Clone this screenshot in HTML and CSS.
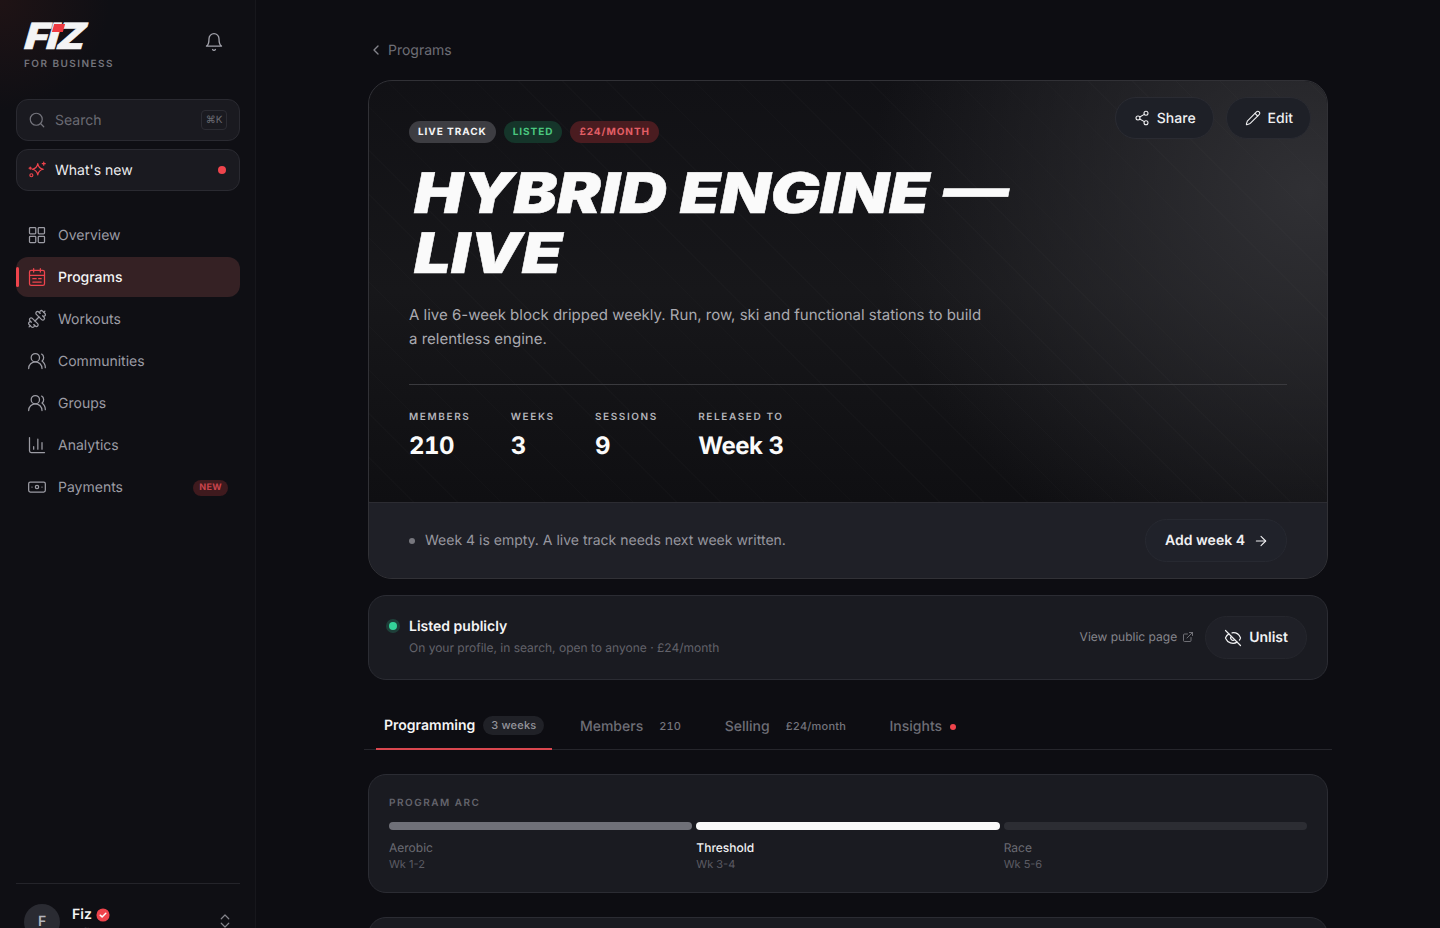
FILE: index.html
```html
<!DOCTYPE html>
<html>
  <head>
    <meta charset="utf-8" />
    <title>Hybrid Engine — Live</title>
    <link rel="stylesheet" href="styles.css">
  </head>
  <body>
    <div class="app">
      <aside class="sidebar">
        <div class="brandrow">
          <div class="brand">
            <div class="logo"><span class="logotext">FIZ</span><span class="logodot"></span></div>
            <div class="brandsub">FOR BUSINESS</div>
          </div>
          <svg class="icon bell" viewBox="0 0 24 24"><path d="M6 8a6 6 0 0 1 12 0c0 7 3 9 3 9H3s3-2 3-9"/><path d="M10.3 21a1.94 1.94 0 0 0 3.4 0"/></svg>
        </div>

        <div class="sidebox searchbox">
          <svg class="icon" viewBox="0 0 24 24"><circle cx="11" cy="11" r="8"/><path d="m21 21-4.3-4.3"/></svg>
          <span class="searchtext">Search</span>
          <span class="kbd">⌘K</span>
        </div>
        <div class="sidebox newsbox">
          <svg class="icon red" viewBox="0 0 24 24"><path d="M13 3.500c.8 4.700 2.800 6.700 7.500 7.500-4.700.8-6.700 2.800-7.500 7.500-.8-4.700-2.800-6.700-7.500-7.500 4.700-.8 6.700-2.800 7.500-7.500z"/><path d="M21 1.500v4M19 3.500h4"/><path d="M3 8v3M1.500 9.500h3"/><circle cx="4.500" cy="19" r="2"/></svg>
          <span class="newstext">What's new</span>
          <span class="reddot"></span>
        </div>

        <nav class="nav">
          <a class="navitem">
            <svg class="icon" viewBox="0 0 24 24"><rect x="3" y="3" width="7.500" height="7.500" rx="1"/><rect x="13.500" y="3" width="7.500" height="7.500" rx="1"/><rect x="13.500" y="13.500" width="7.500" height="7.500" rx="1"/><rect x="3" y="13.500" width="7.500" height="7.500" rx="1"/></svg>
            Overview
          </a>
          <a class="navitem active">
            <svg class="icon red" viewBox="0 0 24 24"><rect x="3" y="4" width="18" height="18" rx="2"/><path d="M8 2v4M16 2v4M3 10h18M7 14h4M14 14h3M7 18h10"/></svg>
            Programs
          </a>
          <a class="navitem">
            <svg class="icon flipx" viewBox="0 0 24 24"><path d="M14.4 14.4 9.600 9.600"/><path d="M18.657 21.485a2 2 0 1 1-2.829-2.828l-1.767 1.768a2 2 0 1 1-2.829-2.829l6.364-6.364a2 2 0 1 1 2.829 2.829l-1.768 1.767a2 2 0 1 1 2.828 2.829z"/><path d="m21.500 21.500-1.400-1.400"/><path d="M3.900 3.900 2.500 2.500"/><path d="M6.404 12.768a2 2 0 1 1-2.829-2.829l1.768-1.767a2 2 0 1 1-2.828-2.829l2.828-2.828a2 2 0 1 1 2.829 2.828l1.767-1.768a2 2 0 1 1 2.829 2.829z"/></svg>
            Workouts
          </a>
          <a class="navitem">
            <svg class="icon" viewBox="0 0 24 24"><path d="M18 21a8 8 0 0 0-16 0"/><circle cx="10" cy="8" r="5"/><path d="M22 20c0-3.370-2-6.500-4-8a5 5 0 0 0-.45-8.300"/></svg>
            Communities
          </a>
          <a class="navitem">
            <svg class="icon" viewBox="0 0 24 24"><path d="M18 21a8 8 0 0 0-16 0"/><circle cx="10" cy="8" r="5"/><path d="M22 20c0-3.370-2-6.500-4-8a5 5 0 0 0-.45-8.300"/></svg>
            Groups
          </a>
          <a class="navitem">
            <svg class="icon" viewBox="0 0 24 24"><path d="M3 3v16a2 2 0 0 0 2 2h16"/><path d="M18 17V9M13 17V5M8 17v-3"/></svg>
            Analytics
          </a>
          <a class="navitem">
            <svg class="icon" viewBox="0 0 24 24"><rect x="2" y="6" width="20" height="12" rx="2"/><circle cx="12" cy="12" r="2"/><path d="M6 12h.01M18 12h.01"/></svg>
            Payments
            <span class="newbadge">NEW</span>
          </a>
        </nav>

        <div class="account">
          <div class="avatar">F</div>
          <div class="accountinfo">
            <div class="accountname">
              Fiz
              <svg class="verified" viewBox="0 0 16 16"><circle cx="8" cy="8" r="7.500"/><path d="m4.800 8.200 2.200 2 4.200-4.200"/></svg>
            </div>
            <div class="accountsub">@fiz</div>
          </div>
          <svg class="icon updown" viewBox="0 0 24 24"><path d="m7 15 5 5 5-5"/><path d="m7 9 5-5 5 5"/></svg>
        </div>
      </aside>

      <main class="main">
        <div class="content">
          <a class="crumb">
            <svg class="icon" viewBox="0 0 24 24"><path d="m15 18-6-6 6-6"/></svg>
            Programs
          </a>

          <section class="hero">
            <div class="herotop">
              <div class="heroactions">
                <button class="pill">
                  <svg class="icon" viewBox="0 0 24 24"><circle cx="18" cy="5" r="3"/><circle cx="6" cy="12" r="3"/><circle cx="18" cy="19" r="3"/><path d="m8.590 13.510 6.830 3.980M15.410 6.510l-6.820 3.980"/></svg>
                  Share
                </button>
                <button class="pill">
                  <svg class="icon" viewBox="0 0 24 24"><path d="M21.174 6.812a1 1 0 0 0-3.986-3.987L3.842 16.174a2 2 0 0 0-.5.830l-1.321 4.352a.5.5 0 0 0 .623.622l4.353-1.320a2 2 0 0 0 .830-.497z"/><path d="m15 5 4 4"/></svg>
                  Edit
                </button>
              </div>
              <div class="tags">
                <span class="tag tagwhite">LIVE TRACK</span>
                <span class="tag taggreen">LISTED</span>
                <span class="tag tagred">£24/MONTH</span>
              </div>
              <h1 class="herotitle">HYBRID ENGINE — LIVE</h1>
              <p class="herodesc">A live 6-week block dripped weekly. Run, row, ski and functional stations to build a relentless engine.</p>
              <div class="stats">
                <div class="stat"><div class="statlabel">MEMBERS</div><div class="statvalue">210</div></div>
                <div class="stat"><div class="statlabel">WEEKS</div><div class="statvalue">3</div></div>
                <div class="stat"><div class="statlabel">SESSIONS</div><div class="statvalue">9</div></div>
                <div class="stat"><div class="statlabel">RELEASED TO</div><div class="statvalue">Week 3</div></div>
              </div>
            </div>
            <div class="herostrip">
              <span class="greydot"></span>
              <span class="striptext">Week 4 is empty. A live track needs next week written.</span>
              <button class="pill addweek">
                Add week 4
                <svg class="icon" viewBox="0 0 24 24"><path d="M5 12h14"/><path d="m12 5 7 7-7 7"/></svg>
              </button>
            </div>
          </section>

          <section class="card listing">
            <span class="greendot"></span>
            <div class="listinginfo">
              <div class="listingtitle">Listed publicly</div>
              <div class="listingsub">On your profile, in search, open to anyone · £24/month</div>
            </div>
            <a class="publiclink">
              View public page
              <svg class="icon" viewBox="0 0 24 24"><path d="M15 3h6v6"/><path d="M10 14 21 3"/><path d="M18 13v6a2 2 0 0 1-2 2H5a2 2 0 0 1-2-2V8a2 2 0 0 1 2-2h6"/></svg>
            </a>
            <button class="pill unlist">
              <svg class="icon" viewBox="0 0 24 24"><path d="M10.733 5.076a10.744 10.744 0 0 1 11.205 6.575 1 1 0 0 1 0 .696 10.747 10.747 0 0 1-1.444 2.490"/><path d="M14.084 14.158a3 3 0 0 1-4.242-4.242"/><path d="M17.479 17.499a10.750 10.750 0 0 1-15.417-5.151 1 1 0 0 1 0-.696 10.750 10.750 0 0 1 4.446-5.143"/><path d="m2 2 20 20"/></svg>
              Unlist
            </button>
          </section>

          <div class="tabs">
            <a class="tab tabactive">Programming <span class="tabbadge">3 weeks</span></a>
            <a class="tab">Members <span class="tabmeta">210</span></a>
            <a class="tab">Selling <span class="tabmeta">£24/month</span></a>
            <a class="tab">Insights <span class="reddot small"></span></a>
          </div>

          <section class="card arc">
            <div class="arclabel">PROGRAM ARC</div>
            <div class="arcbars">
              <div class="arccol">
                <div class="arcbar done"></div>
                <div class="arcname">Aerobic</div>
                <div class="arcweeks">Wk 1-2</div>
              </div>
              <div class="arccol">
                <div class="arcbar current"></div>
                <div class="arcname currentname">Threshold</div>
                <div class="arcweeks">Wk 3-4</div>
              </div>
              <div class="arccol">
                <div class="arcbar"></div>
                <div class="arcname">Race</div>
                <div class="arcweeks">Wk 5-6</div>
              </div>
            </div>
          </section>

          <section class="card nextcard"></section>
        </div>
      </main>
    </div>
  </body>
</html>
```

FILE: styles.css
```css
* {
  box-sizing: border-box;
}

html,
body {
  margin: 0;
  height: 928px;
  overflow: hidden;
}

body {
  background-color: #0d0d12;
  color: #f4f4f5;
  font-family: Inter, "Liberation Sans", sans-serif;
  text-rendering: geometricPrecision;
}

button {
  font-family: inherit;
  text-rendering: geometricPrecision;
}

.icon {
  width: 18px;
  height: 18px;
  fill: none;
  stroke: currentColor;
  stroke-width: 1.6;
  stroke-linecap: round;
  stroke-linejoin: round;
  flex-shrink: 0;
}

.icon.red,
.sidebox .icon.red {
  color: #ef444c;
}

.flipx {
  transform: scaleX(-1);
}

.app {
  display: flex;
  height: 928px;
}

/* sidebar */

.sidebar {
  width: 256px;
  height: 928px;
  flex-shrink: 0;
  display: flex;
  flex-direction: column;
  padding: 0 15px 0 16px;
  border-right: 1px solid #17171c;
  background: radial-gradient(circle at 0 0, #1f1315 0, #0f0f14 110px);
  overflow: hidden;
}

.brandrow {
  display: flex;
  justify-content: space-between;
  align-items: flex-start;
  padding: 22px 16px 0 8px;
  height: 99px;
}

.logo {
  position: relative;
  width: 66px;
  height: 28px;
}

.logotext {
  display: block;
  font-size: 36px;
  line-height: 28px;
  font-weight: 900;
  letter-spacing: -1.500px;
  color: #f4f4f5;
  transform-origin: 0 100%;
  transform: translateX(-2px) skewX(-16deg) scaleX(1.130);
  -webkit-text-stroke: 0.6px #f4f4f5;
}

.logodot {
  position: absolute;
  z-index: 1;
  left: 29px;
  top: 2px;
  width: 11px;
  height: 8px;
  background-color: #ef3b42;
  transform: skewX(-16deg);
}

.brandsub {
  margin-top: 8px;
  font-size: 10px;
  line-height: 12px;
  font-weight: 600;
  letter-spacing: 1.450px;
  color: #74747c;
}

.icon.bell {
  width: 20px;
  height: 20px;
  margin-top: 10px;
  color: #a1a1aa;
}

.sidebox {
  display: flex;
  align-items: center;
  height: 42px;
  padding: 0 12px;
  margin-bottom: 8px;
  border: 1px solid #2a2a31;
  border-radius: 12px;
  background-color: #1a1a20;
  font-size: 14px;
}

.sidebox .icon {
  width: 18px;
  height: 18px;
  margin-right: 9px;
  margin-left: -1px;
  color: #74747c;
}

.searchtext {
  flex: 1;
  color: #6b6b73;
}

.kbd {
  width: 26px;
  height: 20px;
  border: 1px solid #2c2c33;
  border-radius: 4px;
  font-size: 10px;
  line-height: 18px;
  text-align: center;
  color: #6b6b73;
}

.newstext {
  flex: 1;
  color: #ececef;
}

.reddot {
  width: 8px;
  height: 8px;
  margin-right: 1px;
  border-radius: 50%;
  background-color: #ef444c;
}

.reddot.small {
  width: 6px;
  height: 6px;
  margin-right: 0;
}

.nav {
  display: flex;
  flex-direction: column;
  gap: 2px;
  margin-top: 16px;
}

.navitem {
  position: relative;
  display: flex;
  align-items: center;
  gap: 11px;
  height: 40px;
  padding: 0 12px 0 11px;
  border-radius: 12px;
  font-size: 14px;
  font-weight: 400;
  color: #9c9ca4;
}

.navitem .icon {
  width: 20px;
  height: 20px;
  stroke-width: 1.500;
}

.navitem.active {
  background-color: #352124;
  color: #f4f4f5;
  font-weight: 500;
}

.navitem.active::before {
  content: "";
  position: absolute;
  left: 0;
  top: 10px;
  width: 3px;
  height: 20px;
  border-radius: 2px;
  background-color: #ef444c;
}

.newbadge {
  margin-left: auto;
  margin-top: 1px;
  padding: 0 6px;
  height: 16px;
  border-radius: 8px;
  background-color: #3f1a1e;
  color: #c9444c;
  font-size: 9px;
  line-height: 16px;
  font-weight: 700;
  letter-spacing: 0.4px;
}

.account {
  display: flex;
  align-items: flex-start;
  margin-top: auto;
  height: 45px;
  padding: 20px 8px 0 8px;
  border-top: 1px solid #24242a;
  flex-shrink: 0;
}

.avatar {
  width: 36px;
  height: 36px;
  flex-shrink: 0;
  border-radius: 50%;
  background-color: #2a2b32;
  color: #b4b4bb;
  font-size: 14px;
  font-weight: 600;
  line-height: 36px;
  text-align: center;
}

.accountinfo {
  flex: 1;
  margin-left: 12px;
  padding-top: 1px;
}

.accountname {
  display: flex;
  align-items: center;
  gap: 4px;
  height: 20px;
  font-size: 14px;
  font-weight: 600;
  line-height: 20px;
}

.verified {
  width: 14px;
  height: 14px;
  fill: #ef444c;
}

.verified path {
  fill: none;
  stroke: #ffffff;
  stroke-width: 1.700;
  stroke-linecap: round;
  stroke-linejoin: round;
}

.accountsub {
  font-size: 11px;
  line-height: 14px;
  color: #74747c;
}

.icon.updown {
  width: 18px;
  height: 18px;
  margin: 8px -2px 0 0;
  color: #85858c;
}

/* main column */

.main {
  flex: 1;
  height: 928px;
  overflow: hidden;
}

.content {
  width: 960px;
  margin: 0 auto;
  padding-top: 40px;
}

.crumb {
  display: flex;
  align-items: center;
  gap: 4px;
  height: 20px;
  margin-bottom: 20px;
  font-size: 14px;
  color: #6e6e76;
}

.crumb .icon {
  width: 16px;
  height: 16px;
  stroke-width: 2;
  color: #85858c;
}

.hero {
  border: 1px solid #313136;
  border-radius: 24px;
  overflow: hidden;
  background-color: #1f2027;
}

.herotop {
  position: relative;
  height: 422px;
  padding: 40px 40px 0 40px;
  border-bottom: 1px solid #2c2c32;
  background:
    repeating-linear-gradient(45deg, rgba(255, 255, 255, 0.013) 0 1px, transparent 1px 31px),
    radial-gradient(ellipse 440px 400px at 940px 110px, #303034 0, rgba(48, 48, 52, 0) 100%),
    linear-gradient(180deg, #111115 0, #17171a 50%, #0f0f12 100%);
}

.heroactions {
  position: absolute;
  top: 16px;
  right: 16px;
  display: flex;
  gap: 12px;
}

.pill {
  display: inline-flex;
  align-items: center;
  gap: 7px;
  height: 42px;
  padding: 0 17px 0 18px;
  border: 1px solid #2a2b32;
  border-radius: 22px;
  background-color: #1e2027;
  color: #f0f0f2;
  font-size: 14px;
  font-weight: 500;
}

.pill .icon {
  width: 16px;
  height: 16px;
}

.tags {
  display: flex;
  gap: 8px;
}

.tag {
  height: 22px;
  padding: 0 9px;
  border-radius: 11px;
  font-size: 10px;
  line-height: 22px;
  font-weight: 700;
  letter-spacing: 0.950px;
}

.tagwhite {
  background-color: #3d3d42;
  color: #f4f4f5;
}

.taggreen {
  background-color: #15352a;
  color: #4ac77f;
}

.tagred {
  background-color: #4a1c20;
  color: #e35f66;
}

.herotitle {
  width: 520px;
  margin: 20px 0 0 5px;
  font-size: 56px;
  line-height: 60px;
  font-weight: 900;
  font-style: italic;
  color: #fafafa;
  transform-origin: 0 0;
  transform: scaleX(1.165);
  -webkit-text-stroke: 0.5px #fafafa;
}

.herodesc {
  width: 580px;
  margin: 20px 0 0 0;
  font-size: 15px;
  line-height: 24px;
  color: #aaaab0;
}

.stats {
  display: flex;
  gap: 40.400px;
  margin-top: 33px;
  padding-top: 25px;
  border-top: 1px solid #3a3a3e;
}

.statlabel {
  font-size: 10px;
  line-height: 14px;
  font-weight: 600;
  letter-spacing: 1.600px;
  color: #b4b4ba;
}

.statvalue {
  margin-top: 6px;
  font-size: 24px;
  line-height: 32px;
  font-weight: 700;
  font-variant-numeric: tabular-nums;
  letter-spacing: -0.500px;
  color: #fafafa;
}

.herostrip {
  display: flex;
  align-items: center;
  height: 75px;
  padding: 0 40px;
  background-color: #1f2027;
}

.greydot {
  width: 6px;
  height: 6px;
  margin-right: 10px;
  border-radius: 50%;
  background-color: #77777e;
}

.striptext {
  flex: 1;
  font-size: 14px;
  color: #97979f;
}

.pill.addweek {
  height: 43px;
  padding: 0 17px 0 19px;
  gap: 8px;
  background-color: #20222a;
  border-color: #272931;
  font-weight: 600;
}

.card {
  border: 1px solid #2b2c33;
  border-radius: 18px;
  background-color: #1a1b21;
}

.listing {
  display: flex;
  align-items: center;
  height: 85px;
  margin-top: 16px;
  padding: 0 20px 0 20px;
}

.greendot {
  width: 8px;
  height: 8px;
  margin: -24px 12px 0 0;
  border-radius: 50%;
  background-color: #34d399;
  box-shadow: 0 0 0 3px rgba(52, 211, 153, 0.2);
}

.listinginfo {
  flex: 1;
  margin-top: -2px;
}

.listingtitle {
  font-size: 14px;
  line-height: 20px;
  font-weight: 600;
  color: #f4f4f5;
}

.listingsub {
  margin-top: 2px;
  font-size: 12px;
  line-height: 18px;
  color: #62626a;
}

.publiclink {
  display: flex;
  align-items: center;
  gap: 5px;
  margin: -2px 11px 0 0;
  font-size: 12px;
  color: #85858c;
}

.publiclink .icon {
  width: 12px;
  height: 12px;
}

.pill.unlist {
  height: 43px;
  padding: 0 18px;
  gap: 7px;
  background-color: #1f2027;
  border-color: #25262d;
  font-weight: 600;
}

.pill.unlist .icon {
  width: 18px;
  height: 18px;
}

/* tabs */

.tabs {
  display: flex;
  gap: 19.500px;
  height: 54px;
  margin: 16px -4px 0 -4px;
  padding-left: 12px;
  border-bottom: 1px solid #26262c;
}

.tab {
  display: flex;
  align-items: center;
  gap: 8px;
  height: 54px;
  padding: 7px 8px 0 8px;
  font-size: 14px;
  font-weight: 500;
  color: #6e6e76;
}

.tabactive {
  border-bottom: 2px solid #d9474f;
  color: #f4f4f5;
  font-weight: 600;
}

.tabbadge {
  height: 19px;
  padding: 0 8px;
  border-radius: 10px;
  background-color: #202127;
  color: #95959c;
  font-size: 11px;
  font-weight: 500;
  line-height: 19px;
  letter-spacing: 0.200px;
}

.tabmeta {
  margin-top: -2px;
  padding: 0 8px;
  font-size: 11px;
  font-weight: 500;
  font-variant-numeric: tabular-nums;
  letter-spacing: 0.200px;
  color: #74747c;
}

/* arc */

.arc {
  height: 119px;
  margin-top: 24px;
  padding: 21px 20px 0 20px;
}

.arclabel {
  font-size: 10px;
  line-height: 14px;
  font-weight: 600;
  letter-spacing: 1.500px;
  color: #65656d;
}

.arcbars {
  display: flex;
  gap: 4px;
  margin-top: 12px;
}

.arccol {
  flex: 1;
}

.arcbar {
  height: 8px;
  border-radius: 4px;
  background-color: #2c2d33;
}

.arcbar.done {
  background-color: #6f7078;
}

.arcbar.current {
  background-color: #fafafa;
}

.arcname {
  margin-top: 10px;
  font-size: 12px;
  line-height: 16px;
  color: #6b6b73;
}

.currentname {
  color: #f0f0f2;
  font-weight: 500;
}

.arcweeks {
  margin-top: 1px;
  font-size: 11px;
  line-height: 14px;
  color: #5c5c64;
}

.nextcard {
  height: 200px;
  margin-top: 24px;
}
```
